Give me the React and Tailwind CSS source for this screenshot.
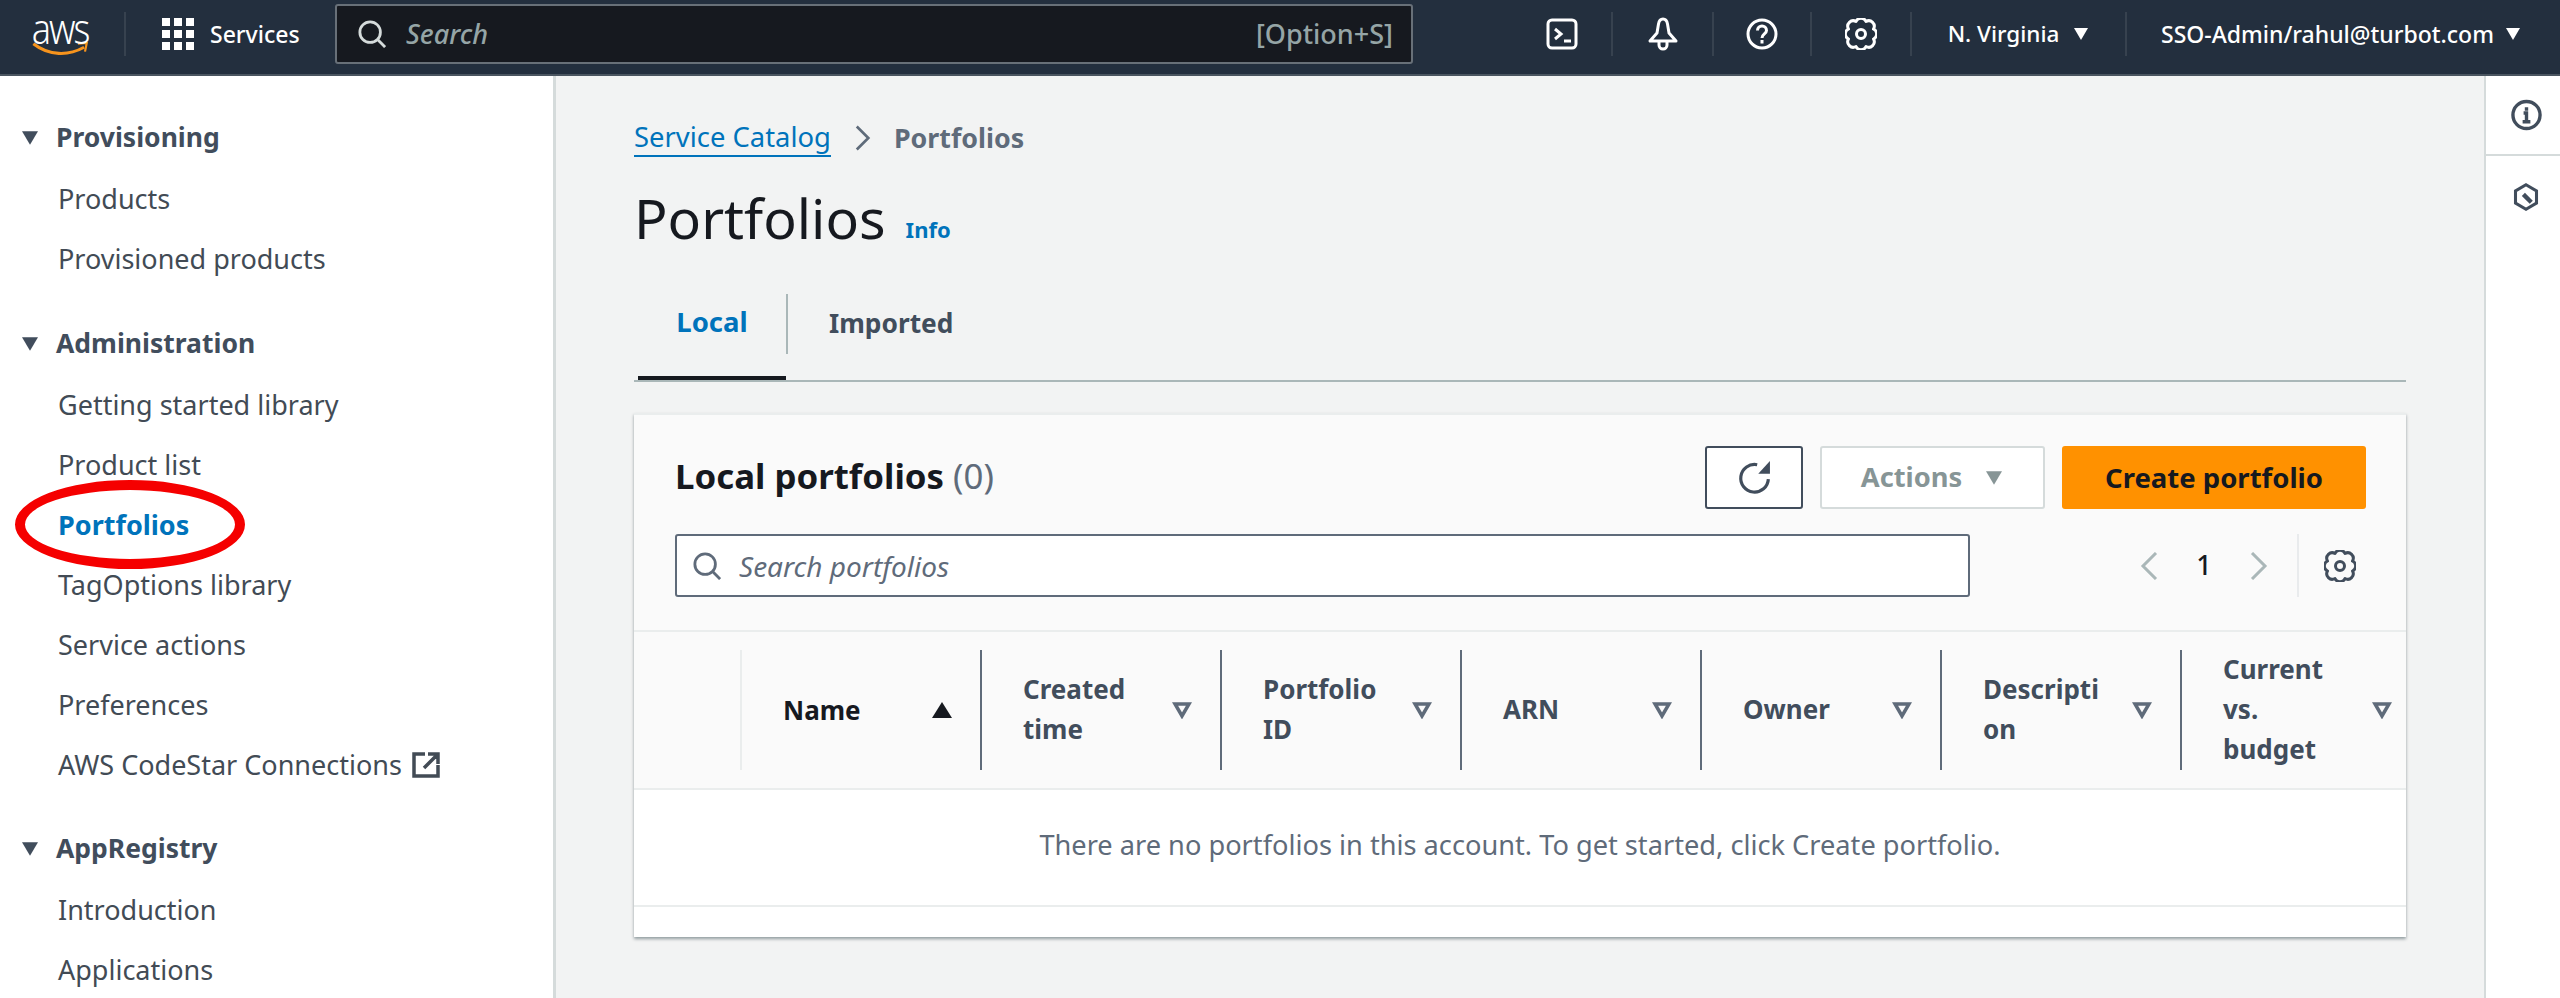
const NAV_FONT = { fontFamily: '"Noto Sans", sans-serif' };

function Caret({ className }) {
  return (
    <svg viewBox="0 0 16 14" className={className} fill="currentColor">
      <path d="M1 1h14L8 13z" />
    </svg>
  );
}

function SortDown() {
  return (
    <svg viewBox="0 0 20 17" className="w-[20px] h-[17px] text-[#5f6b7a]" fill="none" stroke="currentColor" strokeWidth="3.5">
      <path d="M3 2h14L10 14z" />
    </svg>
  );
}

function Gear({ className }) {
  return (
    <svg viewBox="0 0 32 32" className={className} fill="none" stroke="currentColor" strokeWidth="3">
      <path d="M21 3.500A5.500 5.500 0 0 1 28.500 11A5.500 5.500 0 0 1 28.500 21A5.500 5.500 0 0 1 21 28.500A5.500 5.500 0 0 1 11 28.500A5.500 5.500 0 0 1 3.500 21A5.500 5.500 0 0 1 3.500 11A5.500 5.500 0 0 1 11 3.500A5.500 5.500 0 0 1 21 3.500Z" strokeLinejoin="round" />
      <circle cx="16" cy="16" r="4.500" />
    </svg>
  );
}

function SearchIcon({ className }) {
  return (
    <svg viewBox="0 0 30 30" className={className} fill="none" stroke="currentColor" strokeWidth="3">
      <circle cx="13" cy="13" r="11" />
      <path d="M21 21l8 8" />
    </svg>
  );
}

function Chevron({ left, className }) {
  return (
    <svg viewBox="0 0 18 28" className={className} fill="none" stroke="currentColor" strokeWidth="3">
      <path d={left ? 'M16 1L3 14l13 13' : 'M2 1l13 13L2 27'} />
    </svg>
  );
}

function NavHead({ label }) {
  return (
    <div className="flex items-center h-[62px] text-[#414d5c] font-bold text-[26.5px]">
      <Caret className="w-[20px] h-[16px] ml-[20px] mr-[16px]" />
      {label}
    </div>
  );
}

function NavLink({ label, active, ext }) {
  return (
    <div className={'flex items-center h-[60px] pl-[58px] text-[27px] ' + (active ? 'font-bold text-[#0073bb]' : 'text-[#424b55]')}>
      {label}
      {ext && (
        <svg viewBox="0 0 28 26" className="w-[28px] h-[26px] ml-[10px]" fill="none" stroke="currentColor" strokeWidth="3.5">
          <path d="M13 2H2v22h24V13M16 2h10v10M26 2L12 16" />
        </svg>
      )}
    </div>
  );
}

function HeaderIcon({ children, width }) {
  return <div className={'flex items-center justify-center h-[44px] border-r-2 border-[#37424f] ' + width}>{children}</div>;
}

function TopBar() {
  return (
    <div className="flex items-center h-[76px] pb-[6px] bg-[#232f3e] border-b-2 border-[#4a5560] text-white text-[23px] font-medium shrink-0">
      <div className="flex items-center justify-center w-[126px] h-[44px] pr-[4px] border-r-2 border-[#37424f] flex-col">
        <span className="text-[36px] leading-[32px] font-light tracking-[-2px] scale-y-[1.15]">aws</span>
        <svg viewBox="0 0 64 16" className="w-[63px] h-[14px] mt-[-3px]" fill="none">
          <path d="M1 2c18 14 40 14 58 4" stroke="#f7941d" strokeWidth="3.5" />
          <path d="M52 2l10-1-2 10" stroke="#f7941d" strokeWidth="2.5" />
        </svg>
      </div>
      <div className="grid grid-cols-3 gap-[4px] w-[32px] ml-[36px]">
        {Array.from({ length: 9 }).map((_, i) => (
          <div key={i} className="h-[8px] bg-white" />
        ))}
      </div>
      <span className="ml-[16px] w-[125px]">Services</span>
      <div className="flex items-center w-[1078px] h-[60px] bg-[#16191f] border-2 border-[#687078] rounded-[3px] pl-[21px] pr-[18px]">
        <SearchIcon className="w-[28px] h-[28px] text-[#d5dbdb]" />
        <span className="ml-[20px] italic text-[#95a5a6] text-[27px]">Search</span>
        <span className="ml-auto text-[#95a5a6] text-[27px]">[Option+S]</span>
      </div>
      <div className="flex items-center ml-[133px]">
        <HeaderIcon width="w-[67px] justify-start">
          <svg viewBox="0 0 32 32" className="w-[32px] h-[32px]" fill="none" stroke="currentColor" strokeWidth="3">
            <rect x="2" y="2" width="28" height="28" rx="4" />
            <path d="M9 11l6 5-6 5M18 23h7" />
          </svg>
        </HeaderIcon>
        <HeaderIcon width="w-[101px]">
          <svg viewBox="0 0 34 34" className="w-[34px] h-[34px]" fill="none" stroke="currentColor" strokeWidth="3">
            <path d="M17 2c-2 0-4 2-4.500 5L11 16l-7 8h26l-7-8-1.500-9c-.5-3-2.500-5-4.500-5zM13 25v3a4 4 0 0 0 8 0v-3" strokeLinejoin="round" />
          </svg>
        </HeaderIcon>
        <HeaderIcon width="w-[98px]">
          <svg viewBox="0 0 32 32" className="w-[32px] h-[32px]" fill="none" stroke="currentColor" strokeWidth="3">
            <circle cx="16" cy="16" r="14" />
            <path d="M11.500 12.500c0-6 9-6 9 0 0 3.500-4.500 3.500-4.500 7.500M16 22v3.500" />
          </svg>
        </HeaderIcon>
        <HeaderIcon width="w-[100px]">
          <Gear className="w-[32px] h-[32px]" />
        </HeaderIcon>
        <HeaderIcon width="w-[215px]">
          <span className="flex items-center text-[22.5px]">
            N. Virginia
            <Caret className="w-[16px] h-[14px] ml-[14px]" />
          </span>
        </HeaderIcon>
        <span className="flex items-center ml-[34px]">
          SSO-Admin/rahul@turbot.com
          <Caret className="w-[16px] h-[14px] ml-[11px]" />
        </span>
      </div>
    </div>
  );
}

function SideNav() {
  return (
    <div className="relative w-[556px] shrink-0 bg-white border-r-[3px] border-[#d5dbdb] pt-[31px] overflow-hidden">
      <NavHead label="Provisioning" />
      <NavLink label="Products" />
      <NavLink label="Provisioned products" />
      <div className="h-[24px]" />
      <NavHead label="Administration" />
      <NavLink label="Getting started library" />
      <NavLink label="Product list" />
      <NavLink label="Portfolios" active />
      <NavLink label="TagOptions library" />
      <NavLink label="Service actions" />
      <NavLink label="Preferences" />
      <NavLink label="AWS CodeStar Connections" ext />
      <div className="h-[23px]" />
      <NavHead label="AppRegistry" />
      <NavLink label="Introduction" />
      <NavLink label="Applications" />
      {/* red annotation around the active item */}
      <div className="absolute left-[15px] top-[404px] w-[230px] h-[89px] rounded-[50%] border-[10px] border-[#f50000]" />
    </div>
  );
}

const COLUMNS = [
  { lines: ['Created', 'time'] },
  { lines: ['Portfolio', 'ID'] },
  { lines: ['ARN'] },
  { lines: ['Owner'] },
  { lines: ['Descripti', 'on'] },
  { lines: ['Current', 'vs.', 'budget'] },
];

function PortfolioTable() {
  return (
    <div className="bg-white shadow-[0_2px_3px_rgba(0,28,36,0.4)] border-t-2 border-[#eaeded]">
      <div className="bg-[#fafafa] pl-[41px] pr-[40px] pt-[31px] pb-[33px]">
        <div className="flex items-center justify-between h-[63px]">
          <div className="text-[34.8px] font-bold text-[#16191f] mt-[-2px]">
            Local portfolios <span className="font-normal text-[#5f6b7a]">(0)</span>
          </div>
          <div className="flex items-center gap-[17px]">
            <div className="flex items-center justify-center w-[98px] h-[63px] bg-white border-2 border-[#414d5c] rounded-[3px]">
              <svg viewBox="0 0 32 32" className="w-[34px] h-[34px] text-[#414d5c]">
                <path d="M19 3.500A13 13 0 1 0 29.500 17" fill="none" stroke="currentColor" strokeWidth="3" />
                <path d="M31 0v12H20z" fill="currentColor" />
              </svg>
            </div>
            <div className="flex items-center justify-center w-[225px] h-[63px] bg-white border-2 border-[#d5dbdb] rounded-[3px] text-[27.300px] font-bold text-[#879596]">
              Actions
              <Caret className="w-[20px] h-[16px] ml-[22px]" />
            </div>
            <div className="flex items-center justify-center w-[304px] h-[63px] bg-[#ff9100] rounded-[3px] text-[27.500px] font-bold text-[#16191f]">
              Create portfolio
            </div>
          </div>
        </div>
        <div className="flex items-center mt-[25px]">
          <div className="flex items-center w-[1295px] h-[63px] bg-white border-2 border-[#5f6b7a] rounded-[3px] pl-[16px]">
            <SearchIcon className="w-[28px] h-[28px] text-[#5f6b7a]" />
            <span className="ml-[18px] italic text-[28px] text-[#5f6b7a]">Search portfolios</span>
          </div>
          <Chevron left className="w-[18px] h-[28px] ml-[170px] text-[#aab7b8]" />
          <span className="w-[40px] ml-[26px] text-center text-[27px] font-medium text-[#16191f]">1</span>
          <Chevron className="w-[18px] h-[28px] ml-[26px] text-[#aab7b8]" />
          <div className="w-[2px] h-[63px] bg-[#e9ebed] ml-[29px]" />
          <Gear className="w-[32px] h-[32px] ml-[25px] text-[#414d5c]" />
        </div>
      </div>
      <div className="flex h-[160px] bg-[#fafafa] border-y-2 border-[#eaeded] overflow-hidden items-center text-[26px] font-bold text-[#414d5c] leading-[40px]">
        <div className="w-[108px] shrink-0 h-[120px] border-r-2 border-[#eaeded]" />
        <div className="flex items-center justify-between w-[240px] shrink-0 h-[120px] border-r-2 border-[#5f6b7a] pl-[41px] pr-[28px] text-[#16191f]">
          Name
          <svg viewBox="0 0 20 18" className="w-[20px] h-[18px]" fill="currentColor">
            <path d="M10 1l10 16H0z" />
          </svg>
        </div>
        {COLUMNS.map((c, i) => (
          <div key={i} className="flex items-center justify-between w-[240px] shrink-0 h-[120px] border-r-2 border-[#5f6b7a] pl-[41px] pr-[28px]">
            <div className="mt-[-2px]">
              {c.lines.map((l) => (
                <div key={l}>{l}</div>
              ))}
            </div>
            <SortDown />
          </div>
        ))}
      </div>
      <div className="flex items-center justify-center h-[117px] pb-[5px] text-[27.200px] text-[#5f6b7a] border-b-2 border-[#eaeded]">
        There are no portfolios in this account. To get started, click Create portfolio.
      </div>
      <div className="h-[30px]" />
    </div>
  );
}

export default function App() {
  return (
    <div className="flex flex-col h-[998px] w-[2560px] overflow-hidden bg-[#f2f3f3]" style={NAV_FONT}>
      <TopBar />
      <div className="flex flex-1 min-h-0">
        <SideNav />
        <div className="w-[1928px] shrink-0 px-[78px] pt-[40px]">
          <div className="flex items-center text-[27.400px] h-[44px]">
            <span className="text-[#0073bb] border-b-2 border-[#0073bb] leading-[36px]">Service Catalog</span>
            <Chevron className="w-[16px] h-[26px] ml-[24px] mr-[23px] text-[#5f6b7a]" />
            <span className="font-bold text-[#5f6b7a] text-[26.8px]">Portfolios</span>
          </div>
          <div className="flex items-center mt-[20px] h-[76px]">
            <span className="text-[55.500px] leading-[76px] text-[#16191f]">Portfolios</span>
            <span className="ml-[20px] mt-[22px] text-[22px] font-bold text-[#0073bb]">Info</span>
          </div>
          <div className="flex h-[96px] border-b-2 border-[#aab7b8] mt-[30px]">
            <div className="w-[148px] ml-[4px] pb-[18px] flex items-center justify-center border-b-[4px] border-[#16191f] text-[27.500px] font-bold text-[#0073bb]">
              Local
            </div>
            <div className="flex items-center pl-[41px] h-[60px] mt-[8px] border-l-2 border-[#aab7b8] self-start text-[26.300px] font-bold text-[#414d5c]">
              Imported
            </div>
          </div>
          <div className="mt-[31px]">
            <PortfolioTable />
          </div>
        </div>
        <div className="flex-1 bg-white border-l-2 border-[#d5dbdb]">
          <div className="flex items-center justify-center h-[80px] pl-[6px] border-b-2 border-[#d5dbdb]">
            <svg viewBox="0 0 32 32" className="w-[31px] h-[32px] text-[#414d5c]" fill="none" stroke="currentColor" strokeWidth="3.5">
              <circle cx="16" cy="16" r="14" />
              <path d="M13 14h3v9M12 23h8M16 8v3.500" />
            </svg>
          </div>
          <div className="flex items-center justify-center h-[82px] pl-[6px]">
            <svg viewBox="0 0 32 32" className="w-[28px] h-[32px] text-[#414d5c]" fill="none" stroke="currentColor" strokeWidth="3.5">
              <path d="M16 2l12 7v14l-12 7-12-7V9z" />
              <path d="M13 13l9 9" strokeWidth="5" />
            </svg>
          </div>
        </div>
      </div>
    </div>
  );
}
